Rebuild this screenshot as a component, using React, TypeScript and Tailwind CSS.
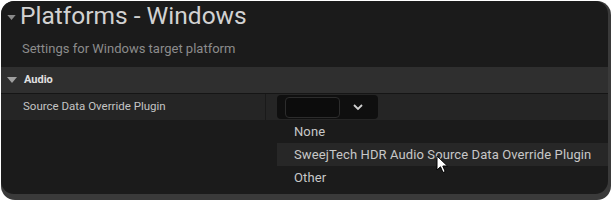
import React from "react";

const font = { fontFamily: "Roboto, 'Noto Sans', 'Liberation Sans', sans-serif" };

const Caret = ({ className, w = 10, h = 6 }: { className?: string; w?: number; h?: number }) => (
  <svg width={w} height={h} viewBox="0 0 10 6" className={className}>
    <path d="M0 0 L10 0 L5 6 Z" fill="currentColor" />
  </svg>
);

const Cursor = () => (
  <svg width="13" height="19" viewBox="0 0 13 19" className="absolute left-[436px] top-[155px]">
    <path
      d="M1 1 L1 15 L4.5 11.8 L7 17.5 L9.2 16.5 L6.8 11 L11.5 11 Z"
      fill="#fff"
      stroke="#000"
      strokeWidth="1"
      strokeLinejoin="round"
    />
  </svg>
);

export default function App() {
  const items = ["None", "SweejTech HDR Audio Source Data Override Plugin", "Other"];
  return (
    <div className="w-[613px] h-[201px] bg-white overflow-hidden relative" style={font}>
      <div className="absolute left-[1px] top-[1px] w-[610px] h-[199px] rounded-[14px] bg-[#3a3a3a]" />
      <div className="relative ml-[1px] mt-[1px] w-[607px] h-[193px] rounded-[13px] bg-[#1b1b1b] overflow-hidden">
        {/* header */}
        <div className="flex items-center h-[30px] pl-[6px]">
          <Caret className="text-[#8a8a8a] mr-[4px] mt-[2px]" w={9} h={5} />
          <span className="text-[24.5px] leading-none text-[#d2d2d2]">Platforms - Windows</span>
        </div>
        <div className="h-[36px] pl-[21px] pt-[11px] text-[13px] leading-none text-[#8c8c8c]">
          Settings for Windows target platform
        </div>

        {/* section */}
        <div className="flex items-center h-[26px] bg-[#2f2f2f] pl-[6px]">
          <Caret className="text-[#a0a0a0] mr-[7px]" />
          <span className="text-[11px] font-bold text-[#e0e0e0]">Audio</span>
        </div>
        <div className="h-[1px] bg-[#151515]" />

        {/* property row */}
        <div className="flex h-[26px] bg-[#252525]">
          <div className="w-[265px] pl-[22px] flex items-center text-[11.5px] text-[#c4c4c4] border-r border-[#1a1a1a]">
            Source Data Override Plugin
          </div>
          <div className="flex items-center pl-[11px]">
            <div className="flex items-center w-[101px] h-[24px] bg-[#0f0f0f] rounded-[4px] pl-[8px]">
              <div className="w-[55px] h-[21px] rounded-[4px] border border-[#2c2c2c] bg-[#0c0c0c]" />
              <svg width="12" height="8" viewBox="0 0 12 8" className="ml-[12px]">
                <path d="M2 2 L6 6 L10 2" fill="none" stroke="#d0d0d0" strokeWidth="1.8" />
              </svg>
            </div>
          </div>
        </div>

        {/* dropdown menu */}
        <div className="ml-[276px] flex flex-col text-[13px] tracking-[0.1px] text-[#c8c8c8]">
          {items.map((t, i) => (
            <div
              key={t}
              className={`h-[23px] flex items-center pl-[17px] ${i === 1 ? "bg-[#272727]" : ""}`}
            >
              {t}
            </div>
          ))}
        </div>
      </div>
      <Cursor />
    </div>
  );
}
